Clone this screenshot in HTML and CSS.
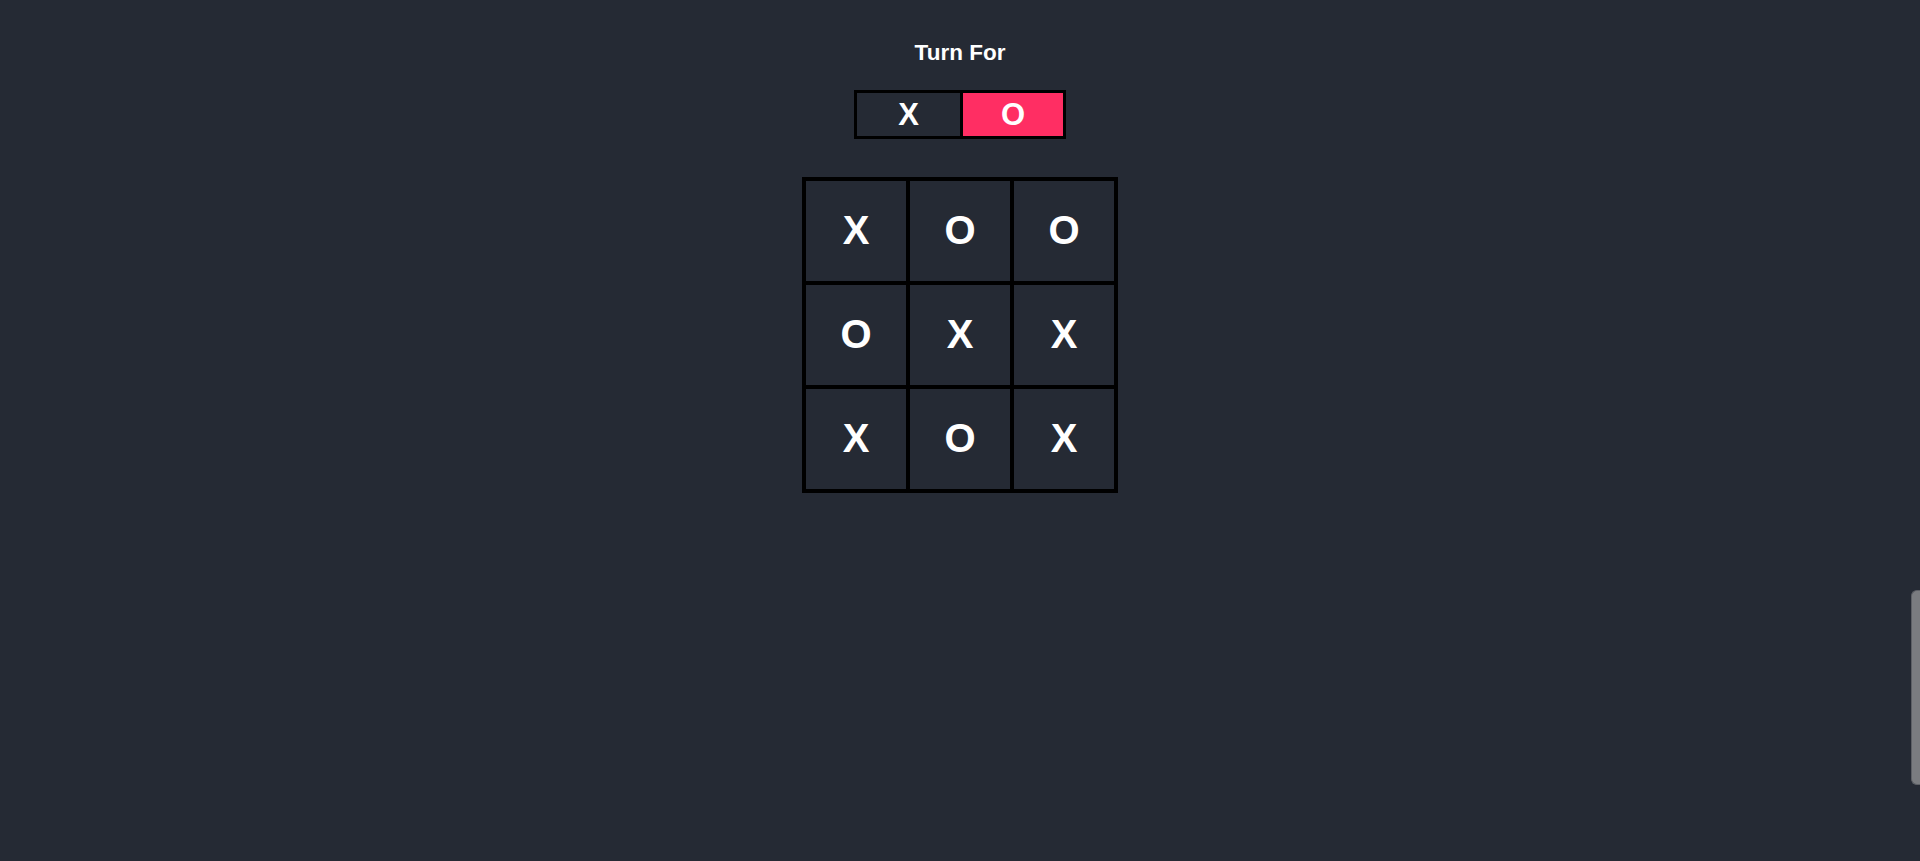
FILE: index.html
```html
<!DOCTYPE html>
<html lang="en">
<head>
<meta charset="utf-8">
<title>Tic Tac Toe</title>
<link rel="stylesheet" href="styles.css">
</head>
<body>
  <main class="game">
    <h1 class="title">Turn For</h1>
    <div class="turn">
      <div class="turn-cell turn-x">X</div>
      <div class="turn-cell turn-o active">O</div>
    </div>
    <div class="board">
      <div class="cell">X</div>
      <div class="cell">O</div>
      <div class="cell">O</div>
      <div class="cell">O</div>
      <div class="cell">X</div>
      <div class="cell">X</div>
      <div class="cell">X</div>
      <div class="cell">O</div>
      <div class="cell">X</div>
    </div>
  </main>
  <div class="side-tab"></div>
</body>
</html>
```

FILE: styles.css
```css
html, body {
  margin: 0;
  padding: 0;
  height: 100%;
}

body {
  background: #252a34;
  color: #ffffff;
  font-family: "Liberation Sans", Arial, sans-serif;
  overflow: hidden;
}

.game {
  display: flex;
  flex-direction: column;
  align-items: center;
  padding-top: 40px;
}

.title {
  margin: 0;
  font-size: 22.5px;
  line-height: 26px;
  font-weight: 700;
  color: #ffffff;
}

.turn {
  margin-top: 24px;
  display: flex;
  width: 212px;
  height: 49px;
  box-sizing: border-box;
  border: 3px solid #000;
}

.turn-cell {
  display: flex;
  align-items: center;
  justify-content: center;
  font-size: 31px;
  font-weight: 700;
}

.turn-x {
  width: 103px;
  border-right: 3px solid #000;
}

.turn-o {
  flex: 1;
}

.turn-cell.active {
  background: #ff2e63;
}

.board {
  margin-top: 38px;
  display: grid;
  grid-template-columns: repeat(3, 100px);
  grid-template-rows: repeat(3, 100px);
  gap: 4px;
  padding: 4px;
  background: #000;
}

.cell {
  background: #252a34;
  display: flex;
  align-items: center;
  justify-content: center;
  font-size: 40px;
  font-weight: 700;
  padding-bottom: 2px;
  box-sizing: border-box;
}

.side-tab {
  position: fixed;
  right: 0;
  top: 590px;
  width: 9px;
  height: 195px;
  background: #7a7c80;
  border: 1px solid #5d6066;
  border-right: none;
  border-radius: 6px 0 0 6px;
  box-sizing: border-box;
}
```
